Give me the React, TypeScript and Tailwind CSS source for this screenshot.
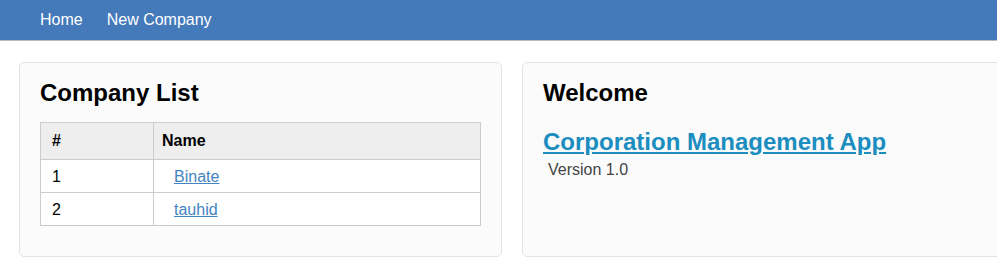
const companies = [
  { id: 1, name: 'Binate' },
  { id: 2, name: 'tauhid' },
];

export default function App() {
  return (
    <div className="w-[997px] h-[267px] overflow-hidden bg-white font-['Liberation_Sans',Arial,sans-serif] text-black">
      {/* Navbar */}
      <nav className="h-[41px] bg-[#4479ba] border-b border-[#b9b9b9] flex items-center gap-[24px] px-[40px] text-[16px] leading-[20px] text-white">
        <a href="#">Home</a>
        <a href="#">New Company</a>
      </nav>

      <div className="flex gap-[20px] pl-[19px] pt-[21px]">
        {/* Company List */}
        <div className="w-[483px] h-[195px] shrink-0 rounded-[5px] border border-[#e3e3e3] bg-[#fbfbfb] px-[20px] pt-[17px]">
          <h3 className="text-[24px] leading-[26px] font-bold">Company List</h3>
          <table className="mt-[16px] w-full border-collapse border border-[#cccccc] bg-white text-[16px] leading-[22px]">
            <thead>
              <tr className="bg-[#eeeeee]">
                <th className="w-[113px] border border-[#cccccc] px-[11px] py-[7px] text-left font-bold">#</th>
                <th className="border border-[#cccccc] px-[8px] py-[7px] text-left font-bold">Name</th>
              </tr>
            </thead>
            <tbody>
              {companies.map(c => (
                <tr key={c.id}>
                  <td className="border border-[#cccccc] px-[11px] pt-[6px] pb-[4px]">{c.id}</td>
                  <td className="border border-[#cccccc] px-[8px] pt-[6px] pb-[4px]">
                    <a href="#" className="ml-[12px] text-[#4384c1] underline">{c.name}</a>
                  </td>
                </tr>
              ))}
            </tbody>
          </table>
        </div>

        {/* Welcome */}
        <div className="w-[483px] h-[195px] shrink-0 rounded-[5px] border border-[#e3e3e3] bg-[#fbfbfb] px-[20px] pt-[17px]">
          <h3 className="text-[24px] leading-[26px] font-bold">Welcome</h3>
          <a href="#" className="mt-[23px] block w-fit text-[24px] leading-[26px] font-bold text-[#1b8dbf] underline">
            Corporation Management App
          </a>
          <p className="mt-[4px] pl-[5px] text-[16px] leading-[22px] text-[#444444]">Version 1.0</p>
        </div>
      </div>
    </div>
  );
}
